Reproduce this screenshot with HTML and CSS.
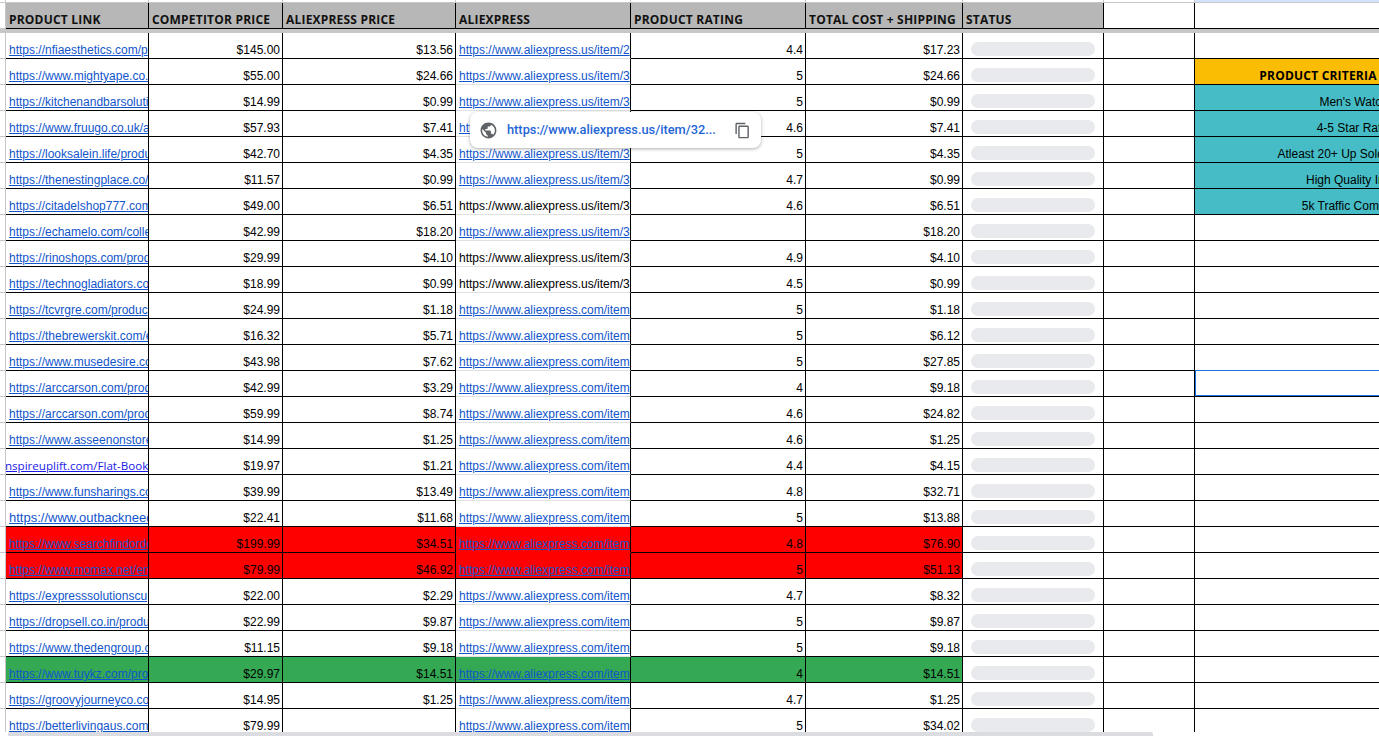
FILE: index.html
```html
<!DOCTYPE html>
<html lang="en">
<head>
  <meta charset="UTF-8" />
  <title>Product Research Sheet</title>
  <link rel="stylesheet" href="styles.css">
</head>
<body>

  <div class="sheet">
    <table class="grid">
      <colgroup>
        <col class="c-gutter"><col class="c-link"><col class="c-comp"><col class="c-price"><col class="c-ali"><col class="c-rating"><col class="c-total"><col class="c-status"><col class="c-blank"><col class="c-notes">
      </colgroup>
      <thead>
        <tr class="top-row"><td></td><td></td><td></td><td></td><td></td><td></td><td></td><td></td><td></td><td class="top-active"></td></tr>
        <tr class="head-row">
          <td class="gutter"></td>
          <th>PRODUCT LINK</th>
          <th>COMPETITOR PRICE</th>
          <th>ALIEXPRESS PRICE</th>
          <th>ALIEXPRESS</th>
          <th>PRODUCT RATING</th>
          <th>TOTAL COST + SHIPPING</th>
          <th>STATUS</th>
          <td></td>
          <td></td>
        </tr>
        <tr class="freeze"><td colspan="10"></td></tr>
      </thead>
      <tbody>
        <tr><td class="gutter"></td><td><a href="#">https://nfiaesthetics.com/p</a></td><td class="num">$145.00</td><td class="num">$13.56</td><td class="ali"><a href="#">https://www.aliexpress.us/item/2</a></td><td class="num">4.4</td><td class="num">$17.23</td><td><div class="pill"></div></td><td></td><td></td></tr>
        <tr><td class="gutter"></td><td><a href="#">https://www.mightyape.co.</a></td><td class="num">$55.00</td><td class="num">$24.66</td><td class="ali"><a href="#">https://www.aliexpress.us/item/3</a></td><td class="num">5</td><td class="num">$24.66</td><td><div class="pill"></div></td><td></td><td class="criteria-head">PRODUCT CRITERIA</td></tr>
        <tr><td class="gutter"></td><td><a href="#">https://kitchenandbarsoluti</a></td><td class="num">$14.99</td><td class="num">$0.99</td><td class="ali"><a href="#">https://www.aliexpress.us/item/3</a></td><td class="num">5</td><td class="num">$0.99</td><td><div class="pill"></div></td><td></td><td class="criteria">Men's Watches</td></tr>
        <tr><td class="gutter"></td><td><a href="#">https://www.fruugo.co.uk/a</a></td><td class="num">$57.93</td><td class="num">$7.41</td><td class="ali"><a href="#">https://www.aliexpress.us/item/3</a></td><td class="num">4.6</td><td class="num">$7.41</td><td><div class="pill"></div></td><td></td><td class="criteria">4-5 Star Ratings</td></tr>
        <tr><td class="gutter"></td><td><a href="#">https://looksalein.life/produ</a></td><td class="num">$42.70</td><td class="num">$4.35</td><td class="ali"><a href="#">https://www.aliexpress.us/item/3</a></td><td class="num">5</td><td class="num">$4.35</td><td><div class="pill"></div></td><td></td><td class="criteria">Atleast 20+ Up Sold Every Day</td></tr>
        <tr><td class="gutter"></td><td><a href="#">https://thenestingplace.co/</a></td><td class="num">$11.57</td><td class="num">$0.99</td><td class="ali"><a href="#">https://www.aliexpress.us/item/3</a></td><td class="num">4.7</td><td class="num">$0.99</td><td><div class="pill"></div></td><td></td><td class="criteria">High Quality Images</td></tr>
        <tr><td class="gutter"></td><td><a href="#">https://citadelshop777.com</a></td><td class="num">$49.00</td><td class="num">$6.51</td><td class="ali">https://www.aliexpress.us/item/3</td><td class="num">4.6</td><td class="num">$6.51</td><td><div class="pill"></div></td><td></td><td class="criteria">5k Traffic Competitors</td></tr>
        <tr><td class="gutter"></td><td><a href="#">https://echamelo.com/colle</a></td><td class="num">$42.99</td><td class="num">$18.20</td><td class="ali"><a href="#">https://www.aliexpress.us/item/3</a></td><td class="num"></td><td class="num">$18.20</td><td><div class="pill"></div></td><td></td><td></td></tr>
        <tr><td class="gutter"></td><td><a href="#">https://rinoshops.com/prod</a></td><td class="num">$29.99</td><td class="num">$4.10</td><td class="ali">https://www.aliexpress.us/item/3</td><td class="num">4.9</td><td class="num">$4.10</td><td><div class="pill"></div></td><td></td><td></td></tr>
        <tr><td class="gutter"></td><td><a href="#">https://technogladiators.co</a></td><td class="num">$18.99</td><td class="num">$0.99</td><td class="ali">https://www.aliexpress.us/item/3</td><td class="num">4.5</td><td class="num">$0.99</td><td><div class="pill"></div></td><td></td><td></td></tr>
        <tr><td class="gutter"></td><td><a href="#">https://tcvrgre.com/produc</a></td><td class="num">$24.99</td><td class="num">$1.18</td><td class="ali"><a href="#">https://www.aliexpress.com/item</a></td><td class="num">5</td><td class="num">$1.18</td><td><div class="pill"></div></td><td></td><td></td></tr>
        <tr><td class="gutter"></td><td><a href="#">https://thebrewerskit.com/e</a></td><td class="num">$16.32</td><td class="num">$5.71</td><td class="ali"><a href="#">https://www.aliexpress.com/item</a></td><td class="num">5</td><td class="num">$6.12</td><td><div class="pill"></div></td><td></td><td></td></tr>
        <tr><td class="gutter"></td><td><a href="#">https://www.musedesire.co</a></td><td class="num">$43.98</td><td class="num">$7.62</td><td class="ali"><a href="#">https://www.aliexpress.com/item</a></td><td class="num">5</td><td class="num">$27.85</td><td><div class="pill"></div></td><td></td><td class="above-active"></td></tr>
        <tr><td class="gutter"></td><td><a href="#">https://arccarson.com/prod</a></td><td class="num">$42.99</td><td class="num">$3.29</td><td class="ali"><a href="#">https://www.aliexpress.com/item</a></td><td class="num">4</td><td class="num">$9.18</td><td><div class="pill"></div></td><td></td><td class="active"></td></tr>
        <tr><td class="gutter"></td><td><a href="#">https://arccarson.com/prod</a></td><td class="num">$59.99</td><td class="num">$8.74</td><td class="ali"><a href="#">https://www.aliexpress.com/item</a></td><td class="num">4.6</td><td class="num">$24.82</td><td><div class="pill"></div></td><td></td><td></td></tr>
        <tr><td class="gutter"></td><td><a href="#">https://www.asseenonstore</a></td><td class="num">$14.99</td><td class="num">$1.25</td><td class="ali"><a href="#">https://www.aliexpress.com/item</a></td><td class="num">4.6</td><td class="num">$1.25</td><td><div class="pill"></div></td><td></td><td></td></tr>
        <tr><td class="gutter"></td><td class="shifted"><a href="#">inspireuplift.com/Flat-Book</a></td><td class="num">$19.97</td><td class="num">$1.21</td><td class="ali"><a href="#">https://www.aliexpress.com/item</a></td><td class="num">4.4</td><td class="num">$4.15</td><td><div class="pill"></div></td><td></td><td></td></tr>
        <tr><td class="gutter"></td><td><a href="#">https://www.funsharings.co</a></td><td class="num">$39.99</td><td class="num">$13.49</td><td class="ali"><a href="#">https://www.aliexpress.com/item</a></td><td class="num">4.8</td><td class="num">$32.71</td><td><div class="pill"></div></td><td></td><td></td></tr>
        <tr><td class="gutter"></td><td class="large"><a href="#">https://www.outbackneeds</a></td><td class="num">$22.41</td><td class="num">$11.68</td><td class="ali"><a href="#">https://www.aliexpress.com/item</a></td><td class="num">5</td><td class="num">$13.88</td><td><div class="pill"></div></td><td></td><td></td></tr>
        <tr class="red first"><td class="gutter"></td><td><a href="#">https://www.searchfindorde</a></td><td class="num">$199.99</td><td class="num">$34.51</td><td class="ali"><a href="#">https://www.aliexpress.com/item</a></td><td class="num">4.8</td><td class="num">$76.90</td><td><div class="pill"></div></td><td></td><td></td></tr>
        <tr class="red"><td class="gutter"></td><td><a href="#">https://www.momax.net/en</a></td><td class="num">$79.99</td><td class="num">$46.92</td><td class="ali"><a href="#">https://www.aliexpress.com/item</a></td><td class="num">5</td><td class="num">$51.13</td><td><div class="pill"></div></td><td></td><td></td></tr>
        <tr><td class="gutter"></td><td><a href="#">https://expresssolutionscu</a></td><td class="num">$22.00</td><td class="num">$2.29</td><td class="ali"><a href="#">https://www.aliexpress.com/item</a></td><td class="num">4.7</td><td class="num">$8.32</td><td><div class="pill"></div></td><td></td><td></td></tr>
        <tr><td class="gutter"></td><td><a href="#">https://dropsell.co.in/produ</a></td><td class="num">$22.99</td><td class="num">$9.87</td><td class="ali"><a href="#">https://www.aliexpress.com/item</a></td><td class="num">5</td><td class="num">$9.87</td><td><div class="pill"></div></td><td></td><td></td></tr>
        <tr><td class="gutter"></td><td><a href="#">https://www.thedengroup.c</a></td><td class="num">$11.15</td><td class="num">$9.18</td><td class="ali"><a href="#">https://www.aliexpress.com/item</a></td><td class="num">5</td><td class="num">$9.18</td><td><div class="pill"></div></td><td></td><td></td></tr>
        <tr class="green"><td class="gutter"></td><td><a href="#">https://www.tuykz.com/pro</a></td><td class="num">$29.97</td><td class="num">$14.51</td><td class="ali"><a href="#">https://www.aliexpress.com/item</a></td><td class="num">4</td><td class="num">$14.51</td><td><div class="pill"></div></td><td></td><td></td></tr>
        <tr><td class="gutter"></td><td><a href="#">https://groovyjourneyco.co</a></td><td class="num">$14.95</td><td class="num">$1.25</td><td class="ali"><a href="#">https://www.aliexpress.com/item</a></td><td class="num">4.7</td><td class="num">$1.25</td><td><div class="pill"></div></td><td></td><td></td></tr>
        <tr><td class="gutter"></td><td><a href="#">https://betterlivingaus.com</a></td><td class="num">$79.99</td><td class="num"></td><td class="ali"><a href="#">https://www.aliexpress.com/item</a></td><td class="num">5</td><td class="num">$34.02</td><td><div class="pill"></div></td><td></td><td></td></tr>
      </tbody>
    </table>
  </div>
  <div class="scrollbar"></div>

  <!-- link preview popup, floats over the sheet -->
  <div class="link-chip">
    <svg class="chip-globe" viewBox="0 0 24 24"><path d="M12 2C6.48 2 2 6.48 2 12s4.48 10 10 10 10-4.48 10-10S17.52 2 12 2zm-1 17.93c-3.95-.49-7-3.85-7-7.93 0-.62.08-1.21.21-1.79L9 15v1c0 1.1.9 2 2 2v1.93zm6.9-2.54c-.26-.81-1-1.39-1.9-1.39h-1v-3c0-.55-.45-1-1-1H8v-2h2c.55 0 1-.45 1-1V7h2c1.1 0 2-.9 2-2v-.41c2.93 1.19 5 4.06 5 7.41 0 2.08-.8 3.97-2.1 5.39z"/></svg>
    <a class="chip-url" href="#">https://www.aliexpress.us/item/32...</a>
    <svg class="chip-copy" viewBox="0 0 24 24"><path d="M16 1H4c-1.1 0-2 .9-2 2v14h2V3h12V1zm3 4H8c-1.1 0-2 .9-2 2v14c0 1.1.9 2 2 2h11c1.1 0 2-.9 2-2V7c0-1.1-.9-2-2-2zm0 16H8V7h11v14z"/></svg>
  </div>

</body>
</html>
```

FILE: styles.css
```css
html, body {
  margin: 0;
  height: 736px;
  overflow: hidden;
  background-color: #fff;
}
body {
  font-family: "Liberation Sans", Arial, sans-serif;
  font-size: 12px;
  color: #000;
}
.sheet {
  height: 732px;
  overflow: hidden;
}
.grid {
  table-layout: fixed;
  width: 1525px;
  border-collapse: separate;
  border-spacing: 0;
}
.c-gutter { width: 6px; }
.c-link { width: 143px; }
.c-comp { width: 134px; }
.c-price { width: 173px; }
.c-ali { width: 175px; }
.c-rating { width: 175px; }
.c-total { width: 157px; }
.c-status { width: 141px; }
.c-blank { width: 91px; }
.c-notes { width: 330px; }

td, th {
  box-sizing: border-box;
  height: 26px;
  padding: 0 2px 1px 3px;
  border-right: 1px solid #000;
  border-bottom: 1px solid #000;
  vertical-align: bottom;
  text-align: left;
  white-space: nowrap;
  overflow: hidden;
  line-height: 14px;
}
td a {
  color: #1155cc;
}

.top-row td {
  height: 3px;
  padding: 0;
  line-height: 0;
  border-color: #c7c7c7;
}
.top-row .top-active {
  background-color: #d3e3fd;
}
.head-row th {
  background-color: #b7b7b7;
  font-family: "Open Sans", sans-serif;
  font-size: 12px;
  font-weight: 700;
  letter-spacing: 0.2px;
  color: #111;
  padding-bottom: 1px;
}
.freeze td {
  height: 4px;
  padding: 0;
  line-height: 0;
  border: 0;
  background-color: #c7c7c7;
}

.gutter,
.top-row .gutter {
  padding: 0;
  border-right-color: #c7c7c7;
  border-bottom-color: #c7c7c7;
}
.num {
  text-align: right;
}
.ali {
  border-bottom-color: #e0e0e0;
}
.shifted {
  padding-left: 0;
  text-indent: -4px;
  font-family: "Open Sans", sans-serif;
  font-size: 11.6px;
}
.shifted a {
  color: #1a1ae6;
}
.large {
  font-size: 13px;
}

.red td:not(.gutter):not(:nth-child(8)):not(:nth-child(9)):not(:nth-child(10)) {
  background-color: #ff0000;
}
.green td:not(.gutter):not(:nth-child(8)):not(:nth-child(9)):not(:nth-child(10)) {
  background-color: #34a853;
}
.red .ali,
.green .ali {
  border-bottom-color: #000;
}
.red.first .ali {
  border-bottom-color: #ff0000;
}

.pill {
  width: 124px;
  height: 14px;
  margin: 0 0 1px 5px;
  border-radius: 7px;
  background-color: #e8eaed;
}

.criteria-head,
.criteria {
  text-align: center;
}
.criteria-head {
  background-color: #fbbc04;
  font-family: "Open Sans", sans-serif;
  font-weight: 700;
  letter-spacing: 0.2px;
  padding-right: 86px;
}
.criteria {
  background-color: #46bdc6;
}
.above-active {
  border-bottom-color: #1a73e8;
}
.active {
  box-shadow: inset 1px 0 #1a73e8, inset 0 -1px #1a73e8;
}

.scrollbar {
  width: 1145px;
  height: 4px;
  margin-left: 8px;
  border-radius: 2px 2px 0 0;
  background-color: #dadce0;
}

.link-chip {
  position: absolute;
  left: 470px;
  top: 112px;
  box-sizing: border-box;
  width: 291px;
  height: 36px;
  display: flex;
  align-items: center;
  padding: 0 10px 0 9px;
  border-radius: 8px;
  background-color: #fff;
  box-shadow: 0 1px 3px rgba(60,64,67,0.3), 0 1px 4px rgba(60,64,67,0.15);
}
.chip-globe {
  width: 19px;
  height: 19px;
  fill: #5f6368;
}
.chip-url {
  flex: 1;
  margin: 0 0 2px 9px;
  font-family: "Roboto", sans-serif;
  font-size: 12.8px;
  font-weight: 500;
  color: #1f66d6;
  text-decoration: none;
  white-space: nowrap;
}
.chip-copy {
  width: 17px;
  height: 17px;
  fill: #5f6368;
}
```
